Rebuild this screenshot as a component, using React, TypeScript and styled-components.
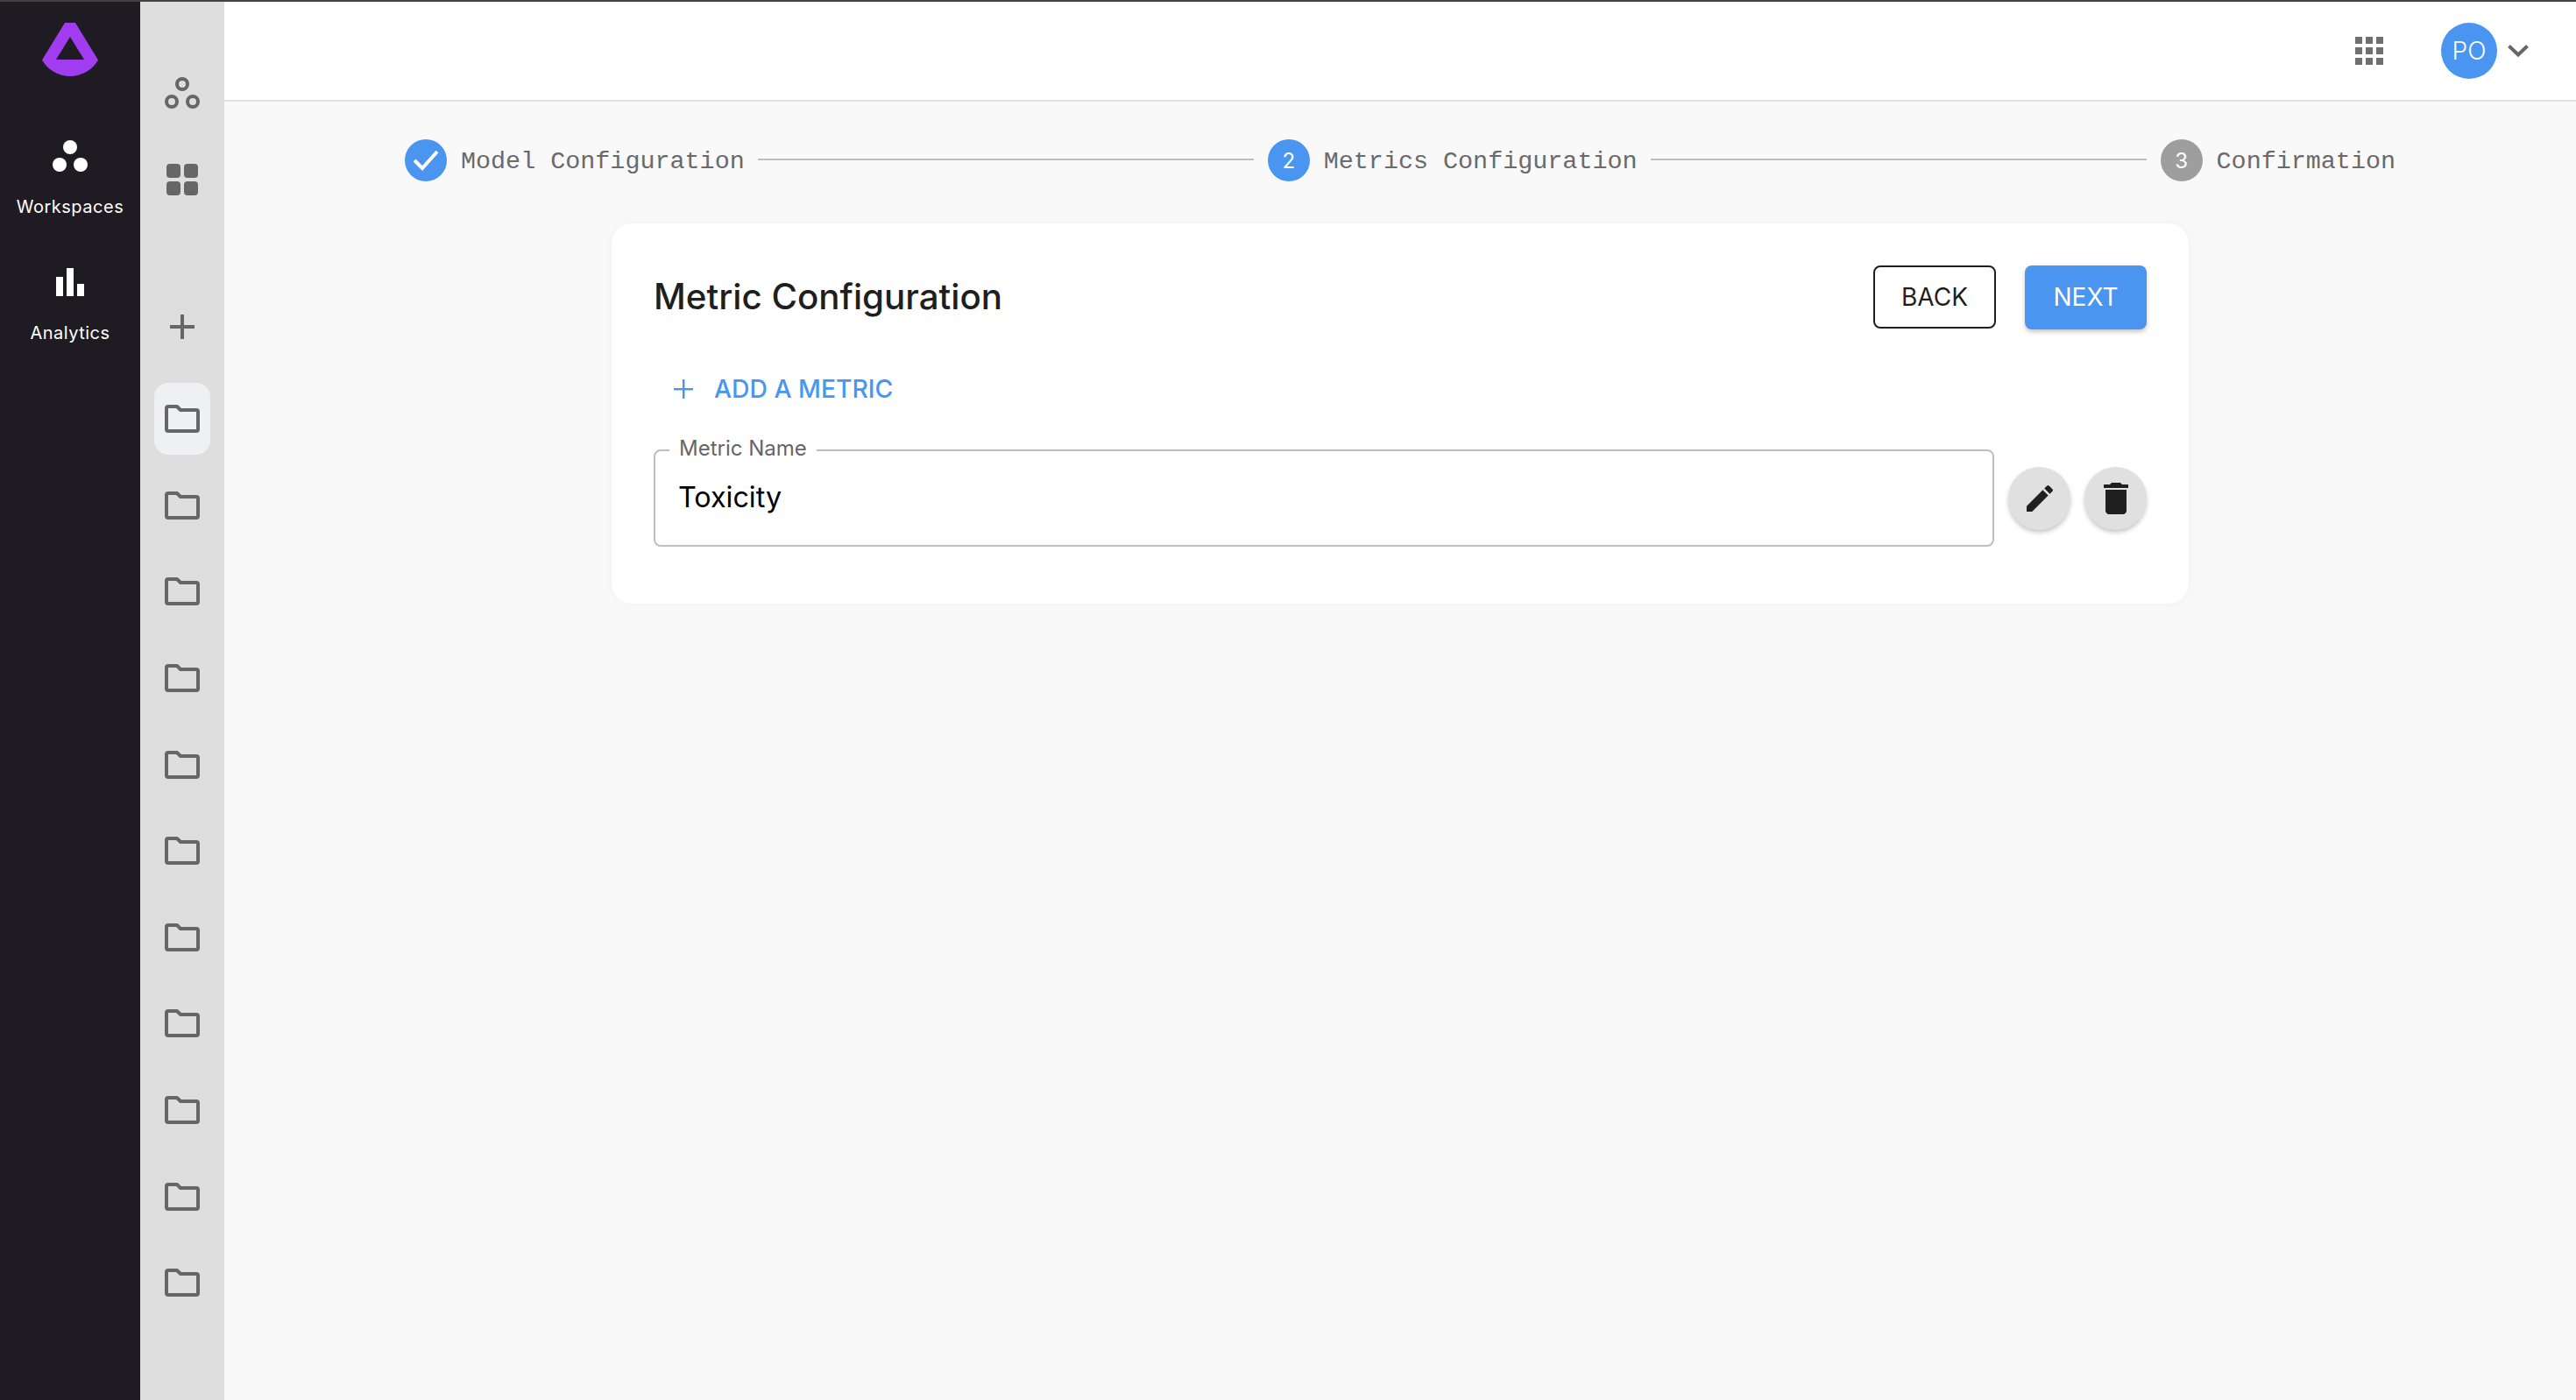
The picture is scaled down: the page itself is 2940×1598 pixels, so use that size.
import React from "react";
import styled, { createGlobalStyle } from "styled-components";

const Global = createGlobalStyle`
  html, body { margin: 0; padding: 0; background: #f9f9f9; }
  body { font-family: Inter, "Liberation Sans", sans-serif; }
  * { box-sizing: border-box; }
`;

const Shell = styled.div`
  display: grid;
  grid-template-rows: 2px 1fr;
  grid-template-columns: 160px 96px 1fr;
  width: 100%;
  height: 100vh;
  overflow: hidden;
`;
const TopStripe = styled.div`
  grid-column: 1 / -1;
  background: #4a3f3f;
`;
const MainRail = styled.nav`
  background: #1e1c22;
  display: flex;
  flex-direction: column;
  align-items: center;
  padding-top: 24px;
`;
const Logo = styled.svg`
  display: block;
  width: 64px;
  height: 61px;
`;
const NavList = styled.div`
  margin-top: 67px;
  display: flex;
  flex-direction: column;
  width: 100%;
`;
const NavItem = styled.div`
  height: 144px;
  display: flex;
  flex-direction: column;
  align-items: center;
  gap: 22px;
  svg { display: block; }
`;
const NavLabel = styled.span`
  color: #fff;
  font-size: 20px;
  line-height: 24px;
  letter-spacing: 0.5px;
`;
const SubRail = styled.aside`
  background: #dedede;
  display: flex;
  flex-direction: column;
  align-items: center;
  gap: 16.6px;
  padding-top: 63px;
`;
const RailButton = styled.div<{ $active?: boolean; $offset?: number }>`
  flex: none;
  width: 64px;
  height: 82px;
  display: flex;
  align-items: center;
  justify-content: center;
  border-radius: 16px;
  background: ${(p) => (p.$active ? "#eff0f4" : "transparent")};
  margin-top: ${(p) => p.$offset ?? 0}px;
  svg { display: block; }
`;
const Main = styled.main`
  display: flex;
  flex-direction: column;
  min-width: 0;
  background: #f9f9f9;
`;
const Header = styled.header`
  flex: none;
  height: 114px;
  background: #fff;
  border-bottom: 2px solid #e0e0e0;
  display: flex;
  align-items: center;
  justify-content: flex-end;
  padding: 0 54px 0 0;
`;
const AppsGrid = styled.div`
  display: grid;
  grid-template-columns: repeat(3, 8px);
  grid-auto-rows: 8px;
  gap: 4px;
  margin-right: 66px;
  span { background: #707070; }
`;
const Avatar = styled.div`
  width: 64px;
  height: 64px;
  border-radius: 50%;
  background: #4a95ef;
  color: #fff;
  font-size: 28px;
  font-weight: 350;
  display: flex;
  align-items: center;
  justify-content: center;
`;
const Chevron = styled.svg`
  display: block;
  width: 24px;
  height: 14px;
  margin-left: 12px;
`;
const Stepper = styled.div`
  display: flex;
  align-items: center;
  padding: 43px 206px 0;
`;
const Step = styled.div`
  flex: none;
  display: flex;
  align-items: center;
  gap: 16px;
`;
const StepCircle = styled.div<{ $color: string }>`
  width: 48px;
  height: 48px;
  border-radius: 50%;
  background: ${(p) => p.$color};
  color: #fff;
  font-size: 24px;
  display: flex;
  align-items: center;
  justify-content: center;
  svg { display: block; }
`;
const StepLabel = styled.span`
  font-family: "Liberation Mono", "DejaVu Sans Mono", monospace;
  font-size: 28.4px;
  line-height: 36px;
  padding-top: 3px;
  color: #6a6a6a;
`;
const Connector = styled.div`
  flex: 1;
  height: 2px;
  margin: -2px 16px 0 15px;
  background: #bdbdbd;
`;
const Card = styled.section`
  align-self: center;
  width: 1800px;
  margin-top: 48px;
  background: #fff;
  border-radius: 24px;
  padding: 48px 48px 65px;
  box-shadow: 0 0 14px rgba(0, 0, 0, 0.035);
`;
const CardHead = styled.div`
  display: flex;
  align-items: center;
  justify-content: space-between;
  height: 73px;
`;
const Title = styled.h1`
  margin: -2px 0 0;
  font-size: 40.3px;
  font-weight: 500;
  color: #1f1f1f;
  line-height: 48px;
`;
const Actions = styled.div`
  display: flex;
  gap: 33px;
`;
const BackButton = styled.button`
  width: 140px;
  height: 72px;
  border: 2px solid #1f1f1f;
  border-radius: 8px;
  background: #fff;
  color: #1f1f1f;
  font: 400 28px Inter, sans-serif;
  padding: 0;
`;
const NextButton = styled.button`
  width: 139px;
  height: 73px;
  border: none;
  border-radius: 8px;
  background: #4a95ef;
  color: #fff;
  font: 400 28px Inter, sans-serif;
  padding: 0 0 2px;
  box-shadow: 0 3px 5px rgba(0, 0, 0, 0.22);
`;
const AddButton = styled.div`
  margin: 40px 0 0 23px;
  height: 56px;
  display: flex;
  align-items: center;
  gap: 24px;
  color: #4a95ef;
  font-size: 28.3px;
  font-weight: 500;
  svg { display: block; }
`;
const MetricRow = styled.div`
  display: flex;
  align-items: center;
  margin-top: 41px;
`;
const Field = styled.div`
  position: relative;
  width: 1530px;
  height: 111px;
  border: 2px solid #bfbfbf;
  border-radius: 8px;
  display: flex;
  align-items: center;
  padding: 0 26px;
  color: #000;
  font-size: 32.3px;
  line-height: 40px;
`;
const FieldValue = styled.span`
  margin-top: -2px;
`;
const FieldLabel = styled.label`
  position: absolute;
  left: 16px;
  top: -17px;
  padding: 0 11px;
  background: #fff;
  color: #666;
  font-size: 24px;
  line-height: 28px;
`;
const RoundActions = styled.div`
  display: flex;
  gap: 16px;
  margin-left: 16px;
`;
const RoundButton = styled.div`
  width: 71px;
  height: 72px;
  border-radius: 50%;
  background: #e0e0e0;
  color: #1f1f1f;
  display: flex;
  align-items: center;
  justify-content: center;
  box-shadow: 0 3px 5px rgba(0, 0, 0, 0.22);
  svg { display: block; fill: currentColor; }
`;

const Folder = () => (
  <svg width="40" height="32" viewBox="0 0 40 32" fill="none" stroke="#666" strokeWidth="4" strokeLinejoin="round">
    <path d="M4 2h10l4 4h18a2 2 0 0 1 2 2v20a2 2 0 0 1-2 2H4a2 2 0 0 1-2-2V4a2 2 0 0 1 2-2z" />
  </svg>
);

const folders = Array.from({ length: 11 }, (_, i) => i);

export default function App() {
  return (
    <>
      <Global />
      <Shell>
        <TopStripe />
        <MainRail>
          <Logo viewBox="0 0 64 61">
            <path
              fill="#a23cf0"
              fillRule="evenodd"
              d="M26 0h12l26 42.5A37 37 0 0 1 0 42.5zM32 16L16 42h32z"
            />
          </Logo>
          <NavList>
            <NavItem>
              <svg width="48" height="48" viewBox="0 0 48 48" fill="#fff">
                <circle cx="24" cy="14" r="8" />
                <circle cx="12" cy="34" r="8" />
                <circle cx="36" cy="34" r="8" />
              </svg>
              <NavLabel>Workspaces</NavLabel>
            </NavItem>
            <NavItem>
              <svg width="48" height="48" viewBox="0 0 48 48" fill="#fff">
                <rect x="8" y="18" width="8" height="22" />
                <rect x="20" y="8" width="8" height="32" />
                <rect x="32" y="26" width="8" height="14" />
              </svg>
              <NavLabel>Analytics</NavLabel>
            </NavItem>
          </NavList>
        </MainRail>
        <SubRail>
          <RailButton>
            <svg width="48" height="48" viewBox="0 0 48 48" fill="none" stroke="#666" strokeWidth="4">
              <circle cx="24" cy="14" r="6" />
              <circle cx="12" cy="34" r="6" />
              <circle cx="36" cy="34" r="6" />
            </svg>
          </RailButton>
          <RailButton>
            <svg width="48" height="48" viewBox="0 0 48 48" fill="#666">
              <rect x="6" y="6" width="16" height="16" rx="4" />
              <rect x="26" y="6" width="16" height="16" rx="4" />
              <rect x="6" y="26" width="16" height="16" rx="4" />
              <rect x="26" y="26" width="16" height="16" rx="4" />
            </svg>
          </RailButton>
          <RailButton $offset={70}>
            <svg width="28" height="28" viewBox="0 0 28 28" fill="#666">
              <rect x="12" y="0" width="4" height="28" />
              <rect x="0" y="12" width="28" height="4" />
            </svg>
          </RailButton>
          {folders.map((i) => (
            <RailButton key={i} $active={i === 0} $offset={i === 0 ? 6.4 : 0}>
              <Folder />
            </RailButton>
          ))}
        </SubRail>
        <Main>
          <Header>
            <AppsGrid>
              {Array.from({ length: 9 }, (_, i) => (
                <span key={i} />
              ))}
            </AppsGrid>
            <Avatar>PO</Avatar>
            <Chevron viewBox="0 0 24 14" fill="none" stroke="#666" strokeWidth="4">
              <path d="M1.5 1.5L12 11.5 22.5 1.5" />
            </Chevron>
          </Header>
          <Stepper>
            <Step>
              <StepCircle $color="#4a95ef">
                <svg width="48" height="48" viewBox="0 0 48 48" fill="none" stroke="#fff" strokeWidth="4">
                  <path d="M11 24l9 9 17-19" />
                </svg>
              </StepCircle>
              <StepLabel>Model Configuration</StepLabel>
            </Step>
            <Connector />
            <Step>
              <StepCircle $color="#4a95ef">2</StepCircle>
              <StepLabel>Metrics Configuration</StepLabel>
            </Step>
            <Connector />
            <Step>
              <StepCircle $color="#9e9e9e">3</StepCircle>
              <StepLabel>Confirmation</StepLabel>
            </Step>
          </Stepper>
          <Card>
            <CardHead>
              <Title>Metric Configuration</Title>
              <Actions>
                <BackButton>BACK</BackButton>
                <NextButton>NEXT</NextButton>
              </Actions>
            </CardHead>
            <AddButton>
              <svg width="22" height="22" viewBox="0 0 22 22" fill="#4a95ef">
                <rect x="10" y="0" width="2.4" height="22" />
                <rect x="0" y="10" width="22" height="2.4" />
              </svg>
              ADD A METRIC
            </AddButton>
            <MetricRow>
              <Field>
                <FieldLabel>Metric Name</FieldLabel>
                <FieldValue>Toxicity</FieldValue>
              </Field>
              <RoundActions>
                <RoundButton>
                  <svg width="40" height="40" viewBox="0 0 24 24">
                    <path d="M3 17.25V21h3.75L17.81 9.94l-3.75-3.75L3 17.25zM20.71 7.04c.39-.39.39-1.02 0-1.41l-2.34-2.34a.9959.9959 0 0 0-1.41 0l-1.83 1.83 3.75 3.75 1.83-1.83z" />
                  </svg>
                </RoundButton>
                <RoundButton>
                  <svg width="48" height="48" viewBox="0 0 24 24">
                    <path d="M6 19c0 1.1.9 2 2 2h8c1.1 0 2-.9 2-2V7H6v12zM19 4h-3.5l-1-1h-5l-1 1H5v2h14V4z" />
                  </svg>
                </RoundButton>
              </RoundActions>
            </MetricRow>
          </Card>
        </Main>
      </Shell>
    </>
  );
}
